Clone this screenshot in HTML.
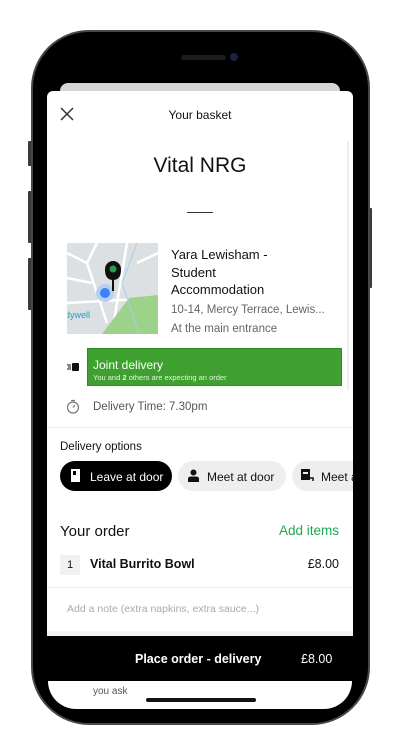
<!DOCTYPE html>
<html><head><style>
*{margin:0;padding:0;box-sizing:border-box}
body{width:400px;height:756px;background:#fff;position:relative;overflow:hidden;font-family:"Liberation Sans",sans-serif;color:#111}
.abs{position:absolute;white-space:nowrap}
.btn{position:absolute;background:#3a3a3c;width:4px;border-radius:1px}
</style></head><body>
<div class="btn" style="left:28px;top:141px;height:25px"></div>
<div class="btn" style="left:28px;top:191px;height:52px"></div>
<div class="btn" style="left:28px;top:258px;height:52px"></div>
<div class="btn" style="left:368px;top:208px;height:80px"></div>
<div class="abs" style="left:31px;top:30px;width:339px;height:695px;background:#000;border-radius:58px;border:2px solid #48484a"></div>
<div class="abs" style="left:181px;top:55px;width:45px;height:5px;background:#1c1c1e;border-radius:3px"></div>
<div class="abs" style="left:230px;top:53px;width:8px;height:8px;background:#1a2340;border-radius:50%"></div>
<div class="abs" style="left:60px;top:83px;width:280px;height:20px;background:#d6d6d6;border-radius:8px"></div>
<div class="abs" style="left:47px;top:91px;width:306px;height:545px;background:#fff;border-radius:6px 6px 0 0;overflow:hidden">
  <svg class="abs" style="left:13px;top:16px" width="14" height="14" viewBox="0 0 14 14"><path d="M1 1L13 13M13 1L1 13" stroke="#333" stroke-width="1.5"/></svg>
  <div class="abs" style="left:0;width:306px;top:17px;text-align:center;font-size:12px;color:#111">Your basket</div>
  <div class="abs" style="left:300px;top:50px;width:2px;height:250px;background:#eee"></div>
  <div class="abs" style="left:0;width:306px;top:63px;text-align:center;font-size:21px;color:#111">Vital NRG</div>
  <div class="abs" style="left:140px;top:121px;width:26px;height:1px;background:#333"></div>
  <div class="abs" style="left:20px;top:152px;width:91px;height:91px;background:#dde0e2;overflow:hidden">
    <svg width="91" height="91" viewBox="0 0 91 91">
      <path d="M0 10L20 20L30 0M20 20L40 80M0 60L91 55M60 0L45 90M70 20L91 10M0 35L25 40" stroke="#fff" stroke-width="2.5" fill="none"/>
      <path d="M62 55L91 52L91 91L35 91Z" fill="#9dd28a"/>
      <path d="M70 0L55 40L72 91" stroke="#a8cde8" stroke-width="1" fill="none"/>
      <circle cx="38" cy="50" r="9" fill="#b7cff3"/>
      <circle cx="38" cy="50" r="5" fill="#3b82f6"/>
      <path d="M46 37C38 37 38 29 38 26A8 8 0 1 1 54 26C54 29 54 37 46 37Z" fill="#111"/>
      <path d="M46 36L46 48" stroke="#111" stroke-width="2"/>
      <circle cx="46" cy="26" r="3.5" fill="#22a050"/>
      <text x="-2" y="75" font-size="9" fill="#1aa0c8" font-family="Liberation Sans">dywell</text>
    </svg>
  </div>
  <div class="abs" style="left:124px;top:155px;font-size:13px;line-height:17.5px;color:#111">Yara Lewisham -<br>Student<br>Accommodation</div>
  <div class="abs" style="left:124px;top:213px;font-size:11.5px;color:#666">10-14, Mercy Terrace, Lewis...</div>
  <div class="abs" style="left:124px;top:232px;font-size:11.5px;color:#666">At the main entrance</div>
  <svg class="abs" style="left:20px;top:270px" width="13" height="11" viewBox="0 0 13 11"><rect x="5" y="2" width="7" height="8" rx="1" fill="#111"/><path d="M0 4h4M1 6h3M0 8h4" stroke="#111" stroke-width="1"/></svg>
  <div class="abs" style="left:40px;top:257px;width:255px;height:38px;background:#3ea02f;border:1px solid #2e8a22"></div>
  <div class="abs" style="left:46px;top:267px;font-size:12px;color:#fff">Joint delivery</div>
  <div class="abs" style="left:46px;top:282px;font-size:7.5px;color:#e4f4e0">You and <b>2</b> others are expecting an order</div>
  <svg class="abs" style="left:19px;top:308px" width="14" height="15" viewBox="0 0 14 15"><circle cx="7" cy="8.5" r="5.5" fill="none" stroke="#777" stroke-width="1.2"/><path d="M5 1.5h4M7 8.5L9 6" stroke="#777" stroke-width="1.2"/></svg>
  <div class="abs" style="left:46px;top:310px;font-size:11.5px;color:#555">Delivery Time: 7.30pm</div>
  <div class="abs" style="left:0;top:336px;width:306px;height:1px;background:#eee"></div>
  <div class="abs" style="left:13px;top:350px;font-size:11.5px;color:#111">Delivery options</div>
  <div class="abs" style="left:13px;top:370px;width:112px;height:30px;background:#000;border-radius:15px"></div>
  <svg class="abs" style="left:23px;top:378px" width="11" height="13" viewBox="0 0 11 13"><rect x="1" y="0" width="9" height="13" fill="#fff"/><rect x="3" y="2" width="3" height="4" fill="#000"/></svg>
  <div class="abs" style="left:43px;top:379px;font-size:12px;color:#fff">Leave at door</div>
  <div class="abs" style="left:131px;top:370px;width:108px;height:30px;background:#eee;border-radius:15px"></div>
  <svg class="abs" style="left:141px;top:378px" width="11" height="13" viewBox="0 0 11 13"><circle cx="5.5" cy="3.5" r="3" fill="#111"/><path d="M0 13V10Q0 7.5 3 7.5H8Q11 7.5 11 10V13Z" fill="#111"/></svg>
  <div class="abs" style="left:160px;top:379px;font-size:12px;color:#111">Meet at door</div>
  <div class="abs" style="left:245px;top:370px;width:80px;height:30px;background:#eee;border-radius:15px"></div>
  <svg class="abs" style="left:254px;top:378px" width="13" height="13" viewBox="0 0 13 13"><rect x="0" y="0" width="9" height="11" fill="#111"/><rect x="2" y="3" width="5" height="2" fill="#eee"/><path d="M9 9h3v3" stroke="#111" stroke-width="1.5" fill="none"/></svg>
  <div class="abs" style="left:274px;top:379px;font-size:12px;color:#111">Meet a</div>
  <div class="abs" style="left:13px;top:432px;font-size:15px;color:#111">Your order</div>
  <div class="abs" style="right:14px;top:432px;font-size:13.5px;color:#1fa855">Add items</div>
  <div class="abs" style="left:13px;top:464px;width:20px;height:20px;background:#f1f1f1;font-size:11px;text-align:center;line-height:20px">1</div>
  <div class="abs" style="left:43px;top:466px;font-size:12.5px;color:#111;font-weight:bold">Vital Burrito Bowl</div>
  <div class="abs" style="right:14px;top:466px;font-size:12.5px;color:#111">£8.00</div>
  <div class="abs" style="left:0;top:496px;width:306px;height:1px;background:#eee"></div>
  <div class="abs" style="left:20px;top:512px;font-size:10.5px;color:#aaa">Add a note (extra napkins, extra sauce...)</div>
  <div class="abs" style="left:0;top:540px;width:306px;height:5px;background:#f3f3f3"></div>
</div>
<div class="abs" style="left:47px;top:636px;width:306px;height:45px;background:#000"></div>
<div class="abs" style="left:135px;top:652px;font-size:12.5px;color:#fff;font-weight:bold">Place order - delivery</div>
<div class="abs" style="left:301px;top:652px;font-size:12.5px;color:#fff">£8.00</div>
<div class="abs" style="left:48px;top:681px;width:304px;height:28px;background:#fff;border-radius:0 0 40px 40px"></div>
<div class="abs" style="left:93px;top:686px;font-size:10px;color:#555">you ask</div>
<div class="abs" style="left:146px;top:698px;width:110px;height:4px;background:#111;border-radius:2px"></div>
</body></html>
